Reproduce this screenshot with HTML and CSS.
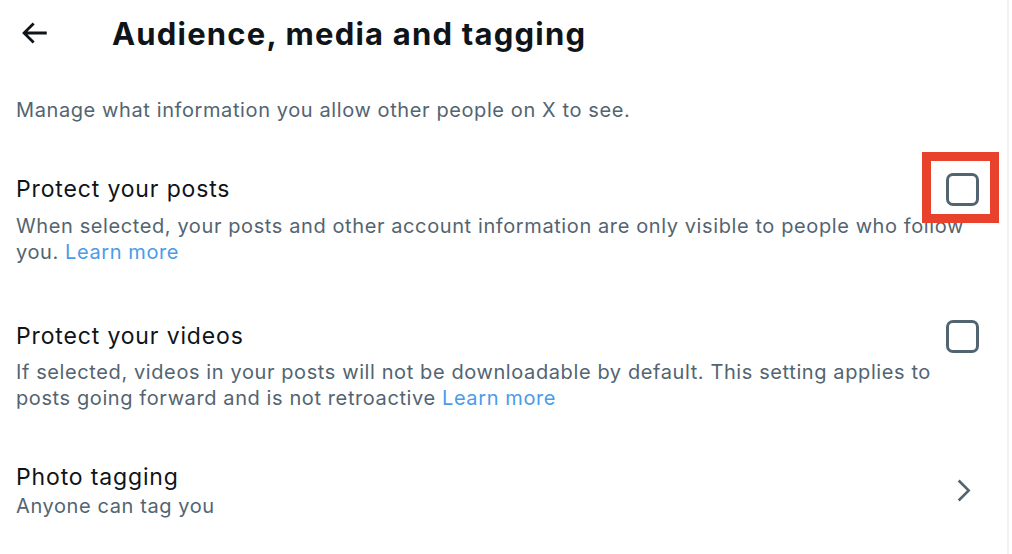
FILE: index.html
```html
<!DOCTYPE html>
<html lang="en">
<head>
  <meta charset="UTF-8" />
  <meta name="viewport" content="width=device-width, initial-scale=1.0"/>
  <title>Audience, media and tagging</title>
  <link rel="stylesheet" href="styles.css">
</head>
<body>

<div class="column">
  <div class="header">
    <button class="back" aria-label="Back">
      <svg viewBox="0 0 24 24"><path d="M7.414 13l5.043 5.04-1.414 1.42L3.586 12l7.457-7.46 1.414 1.42L7.414 11H21v2H7.414z"/></svg>
    </button>
    <h2>Audience, media and tagging</h2>
  </div>

  <p class="intro">Manage what information you allow other people on X to see.</p>

  <div class="setting">
    <div class="setting-top">
      <span class="setting-title">Protect your posts</span>
      <span class="check-wrap">
        <span class="check"></span>
        <span class="highlight"></span>
      </span>
    </div>
    <p class="setting-desc">When selected, your posts and other account information are only visible to people who follow you. <a href="#">Learn more</a></p>
  </div>

  <div class="setting second">
    <div class="setting-top">
      <span class="setting-title">Protect your videos</span>
      <span class="check-wrap"><span class="check"></span></span>
    </div>
    <p class="setting-desc">If selected, videos in your posts will not be downloadable by default. This setting applies to posts going forward and is not retroactive <a href="#">Learn more</a></p>
  </div>

  <div class="link-row">
    <div>
      <div class="setting-title">Photo tagging</div>
      <div class="link-sub">Anyone can tag you</div>
    </div>
    <svg class="chevron" viewBox="0 0 24 24"><path d="M14.586 12L7.543 4.96l1.414-1.42L17.414 12l-8.457 8.46-1.414-1.42L14.586 12z"/></svg>
  </div>
</div>

</body>
</html>
```

FILE: styles.css
```css
body {
  margin: 0;
  background: #ffffff;
  font-family: Inter, "Noto Sans", sans-serif;
  color: #0f1419;
}

.column {
  width: 1007px;
  min-height: 554px;
  border-right: 2px solid #eff3f4;
  box-sizing: content-box;
}

.header {
  height: 66px;
  display: flex;
  align-items: center;
}

.back {
  background: none;
  border: none;
  padding: 0;
  margin-left: 17px;
  width: 34px;
  height: 34px;
  cursor: pointer;
}

.back svg {
  width: 34px;
  height: 34px;
  fill: #0f1419;
  display: block;
}

.header h2 {
  margin: 0 0 0 61px;
  font-size: 31px;
  font-weight: 700;
  letter-spacing: 1.2px;
}

.intro {
  margin: 31px 0 0;
  padding: 0 16px;
  font-size: 20px;
  line-height: 26px;
  color: #536471;
  letter-spacing: 0.6px;
}

.setting {
  margin-top: 51px;
  padding: 0 16px;
}

.setting.second {
  margin-top: 56px;
}

.setting-top {
  display: flex;
  align-items: center;
  justify-content: space-between;
  height: 30px;
}

.setting-title {
  font-size: 23px;
  line-height: 30px;
  color: #0f1419;
  letter-spacing: 0.85px;
}

.check-wrap {
  position: relative;
  margin-right: 12px;
}

.check {
  display: block;
  width: 33px;
  height: 33px;
  box-sizing: border-box;
  border: 3px solid #536471;
  border-radius: 7px;
}

.highlight {
  position: absolute;
  left: -24px;
  top: -21px;
  width: 77px;
  height: 71px;
  box-sizing: border-box;
  border: 9px solid #e8412c;
}

.setting-desc {
  margin: 9px 0 0;
  font-size: 20px;
  line-height: 26px;
  color: #536471;
  letter-spacing: 0.6px;
  padding-right: 11px;
}

.second .setting-desc {
  margin-top: 8px;
}

.setting-desc a {
  color: #4a9be8;
  text-decoration: none;
}

.link-row {
  margin-top: 51px;
  padding: 0 16px;
  display: flex;
  align-items: center;
  justify-content: space-between;
}

.link-sub {
  font-size: 20px;
  line-height: 26px;
  color: #536471;
  letter-spacing: 0.6px;
  margin-top: 1px;
}

.chevron {
  width: 31px;
  height: 31px;
  fill: #536471;
  margin-right: 12px;
  margin-top: 0;
}
```
